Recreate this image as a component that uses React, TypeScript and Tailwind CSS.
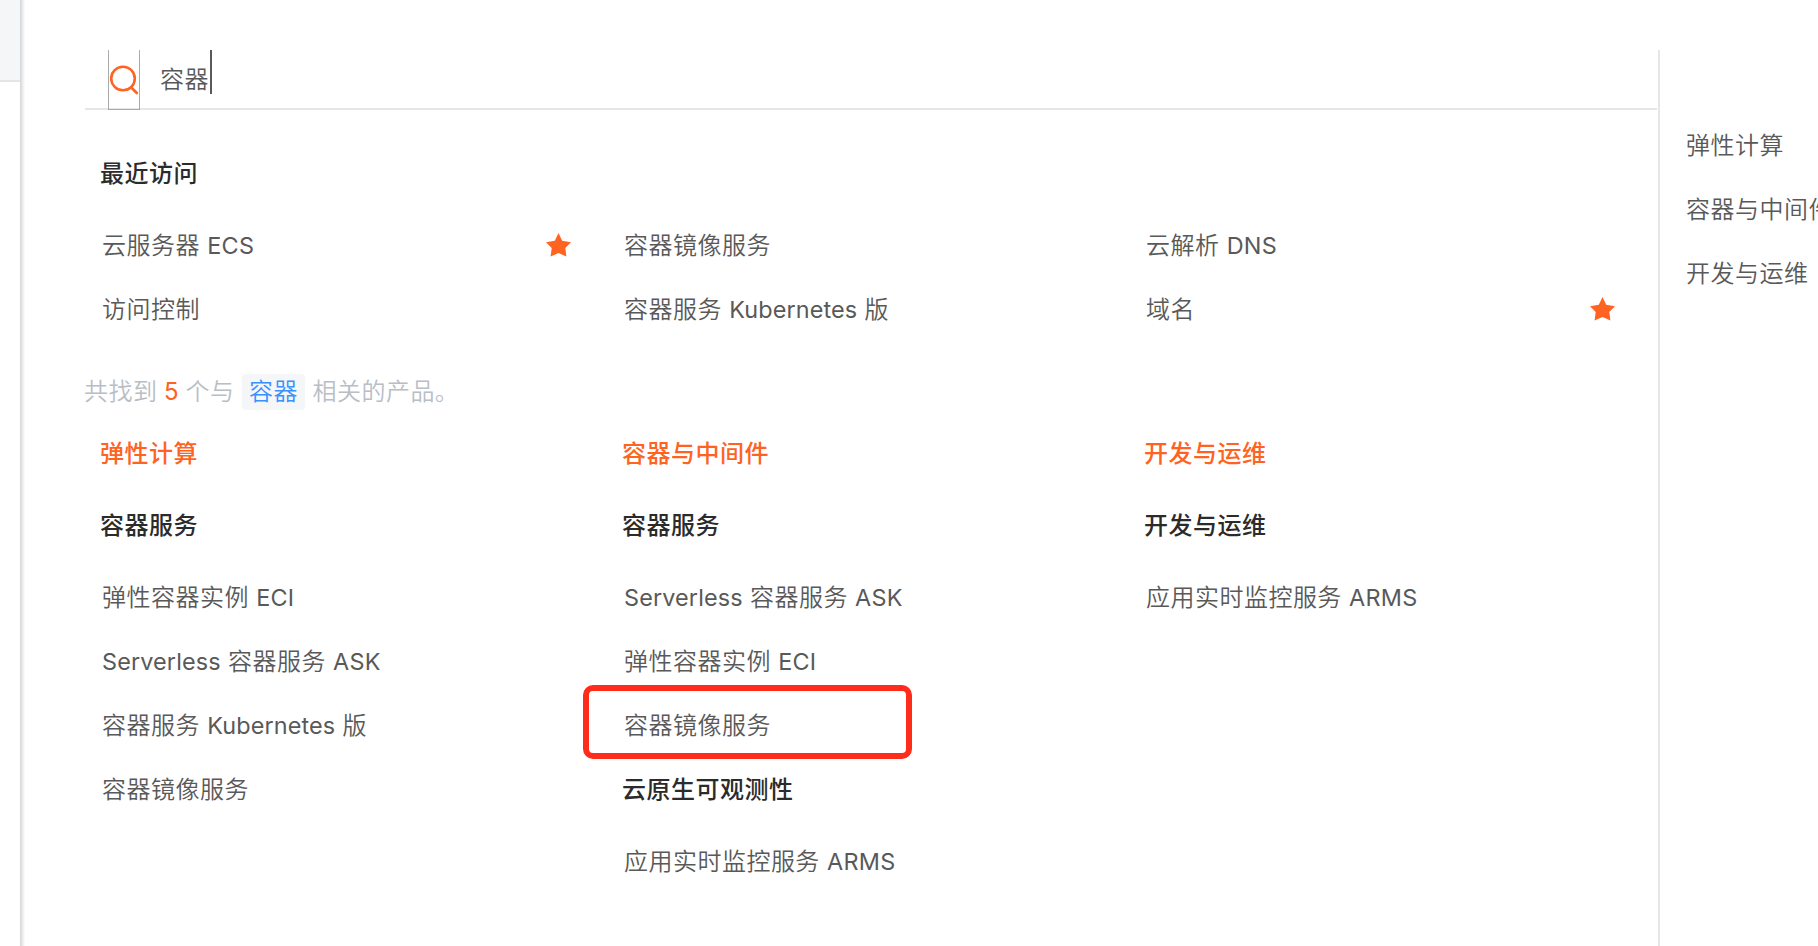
import React from "react";

type Item = { name: string; starred?: boolean; marked?: boolean };
type Group = { title: string; items: Item[] };
type Category = { title: string; groups: Group[] };

const recent: Item[][] = [
  [{ name: "云服务器 ECS", starred: true }, { name: "访问控制" }],
  [{ name: "容器镜像服务" }, { name: "容器服务 Kubernetes 版" }],
  [{ name: "云解析 DNS" }, { name: "域名", starred: true }],
];

const categories: Category[] = [
  {
    title: "弹性计算",
    groups: [
      {
        title: "容器服务",
        items: [
          { name: "弹性容器实例 ECI" },
          { name: "Serverless 容器服务 ASK" },
          { name: "容器服务 Kubernetes 版" },
          { name: "容器镜像服务" },
        ],
      },
    ],
  },
  {
    title: "容器与中间件",
    groups: [
      {
        title: "容器服务",
        items: [
          { name: "Serverless 容器服务 ASK" },
          { name: "弹性容器实例 ECI" },
          { name: "容器镜像服务", marked: true },
        ],
      },
      { title: "云原生可观测性", items: [{ name: "应用实时监控服务 ARMS" }] },
    ],
  },
  {
    title: "开发与运维",
    groups: [{ title: "开发与运维", items: [{ name: "应用实时监控服务 ARMS" }] }],
  },
];

function Mixed({ text }: { text: string }) {
  return (
    <>
      {text.split(/([A-Za-z]+)/).map((part, i) =>
        i % 2 ? (
          <span
            key={i}
            className={
              /[a-z]/.test(part)
                ? "text-[23.4px] font-normal tracking-[0.14px]"
                : "text-[23.4px] font-normal tracking-[0.3px]"
            }
          >
            {part}
          </span>
        ) : (
          <React.Fragment key={i}>{part}</React.Fragment>
        )
      )}
    </>
  );
}

function Star() {
  return (
    <svg className="mb-[2px] h-6 w-[25px]" viewBox="0 0 25 24" fill="#ff6322">
      <path d="M12.5 0 L16.2 7.7 L25 9.2 L19.3 15 L20.4 23.6 L12.5 20 L4.6 23.6 L5.7 15 L0 9.2 L8.8 7.7 Z" />
    </svg>
  );
}

function Row({ item }: { item: Item }) {
  return (
    <li className="relative flex h-16 items-center justify-between pr-[51.5px] pl-[2px] text-[#595959]">
      <span><Mixed text={item.name} /></span>
      {item.starred && <Star />}
      {item.marked && (
        <div className="absolute -top-[9px] -left-[39px] h-[74px] w-[329px] rounded-[10px] border-[6px] border-[#ff2c1b]" />
      )}
    </li>
  );
}

function Heading({ children, accent }: { children: string; accent?: boolean }) {
  return (
    <h3 className={`mb-2 flex h-16 items-center font-medium ${accent ? "text-[#ff6322]" : "text-[#2b2b2b]"}`}>
      {children}
    </h3>
  );
}

export default function App() {
  return (
    <div className="flex h-[946px] w-[1818px] overflow-hidden bg-white font-['Inter','Noto_Sans_CJK_SC',sans-serif] text-[24px] leading-9 font-[350] tracking-[0.48px] whitespace-nowrap">
      <aside className="w-5 shrink-0">
        <div className="h-[82px] border-b-2 border-[#e4e5e6] bg-[#f4f6f8]" />
      </aside>
      <div className="w-[5px] shrink-0 bg-linear-to-r from-[#d4d5d7] to-white" />

      <main className="mt-[50px] ml-[60px] w-[1573px] shrink-0">
        <div className="mr-px flex h-[60px] border-b-2 border-[#e6e6e6]">
          <div className="ml-[23px] h-[60px] w-8 border border-t-0 border-[#ababab]">
            <svg className="mt-[14px] ml-[1px] h-[31px] w-[29px]" viewBox="0 0 29 31" fill="none" stroke="#ff6322" strokeWidth="2.6" strokeLinecap="round">
              <circle cx="13" cy="14.5" r="11.8" />
              <path d="M21 23.3 L26.8 29" />
            </svg>
          </div>
          <div className="ml-5 flex h-11 border-r-2 border-[#595959] pr-px text-[#595959]">
            <span className="mt-3">容器</span>
          </div>
        </div>

        <section className="pt-8 pl-[15px]">
          <Heading>最近访问</Heading>
          <div className="grid grid-cols-[522px_522px_522px]">
            {recent.map((items, i) => (
              <ul key={i}>{items.map((item) => <Row key={item.name} item={item} />)}</ul>
            ))}
          </div>
        </section>

        <p className="-ml-px flex h-20 pt-8 text-[#b8bec6]">
          <span>共找到</span>
          <span className="mx-[6.5px] font-normal text-[#ff6322]">5</span>
          <span>个与</span>
          <mark className="mx-[7px] h-9 rounded bg-[#f4f6f8] px-[7.5px] text-[#3891ff]">容器</mark>
          <span>相关的产品。</span>
        </p>

        <section className="grid grid-cols-[522px_522px_522px] pl-[15px]">
          {categories.map((category) => (
            <div key={category.title}>
              <Heading accent>{category.title}</Heading>
              {category.groups.map((group) => (
                <div key={group.title}>
                  <Heading>{group.title}</Heading>
                  <ul>
                    {group.items.map((item) => <Row key={item.name} item={item} />)}
                  </ul>
                </div>
              ))}
            </div>
          ))}
        </section>
      </main>

      <nav className="mt-[50px] flex flex-1 flex-col border-l-2 border-[#e6e6e6] pt-16 pl-[26px] text-[#595959]">
        <a className="flex h-16 items-center">弹性计算</a>
        <a className="flex h-16 items-center">容器与中间件</a>
        <a className="flex h-16 items-center">开发与运维</a>
      </nav>
    </div>
  );
}
